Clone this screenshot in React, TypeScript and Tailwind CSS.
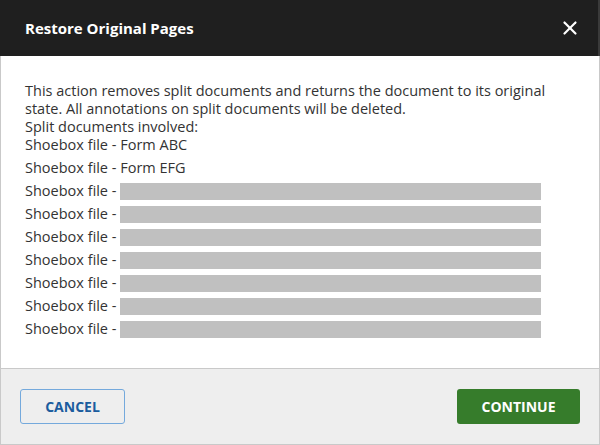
import { X } from "lucide-react";

const named = ["Form ABC", "Form EFG"];
const hidden = [1, 2, 3, 4, 5, 6, 7];

export default function App() {
  return (
    <div
      className="w-[600px] h-[445px] flex flex-col bg-white text-[#333333] overflow-hidden"
      style={{ fontFamily: '"Open Sans", "Noto Sans", sans-serif' }}
    >
      {/* Header */}
      <div className="h-[56px] shrink-0 bg-[#1f1f1f] flex items-center justify-between pl-[25px] pr-[17px] border-r-2 border-[#3a3a3a]">
        <h1 className="text-white text-[15px] font-bold">Restore Original Pages</h1>
        <button className="text-white">
          <X className="w-[22px] h-[22px]" strokeWidth={2.4} />
        </button>
      </div>

      {/* Body */}
      <div className="flex-1 border-x border-[#c9c9c9] pt-[26px] pl-[24px] text-[14.5px] leading-[18px]">
        <p className="w-[522px]">
          This action removes split documents and returns the document to its original state. All annotations on split documents will be deleted.
        </p>
        <p>Split documents involved:</p>
        <ul>
          {named.map((n) => (
            <li key={n} className="h-[23px]">
              Shoebox file - {n}
            </li>
          ))}
          {hidden.map((i) => (
            <li key={i} className="h-[23px] flex items-start">
              <span>Shoebox file -&nbsp;</span>
              <span className="mt-[1px] w-[421px] h-[17px] bg-[#c0c0c0]" />
            </li>
          ))}
        </ul>
      </div>

      {/* Footer */}
      <div className="h-[77px] shrink-0 bg-[#eeeeee] border border-[#c9c9c9] flex items-center justify-between pl-[19px] pr-[19px]">
        <button className="w-[105px] h-[35px] rounded-[3px] border border-[#74a9dc] text-[#1b5c9e] text-[14px] font-bold">
          CANCEL
        </button>
        <button className="w-[123px] h-[35px] rounded-[3px] bg-[#367c2b] text-white text-[14px] font-bold">
          CONTINUE
        </button>
      </div>
    </div>
  );
}
